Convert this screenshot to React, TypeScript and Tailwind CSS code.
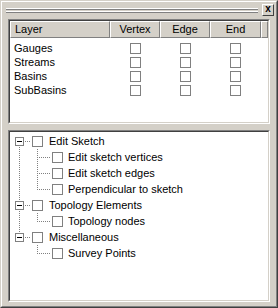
const tree = [
  { label: 'Edit Sketch', children: ['Edit sketch vertices', 'Edit sketch edges', 'Perpendicular to sketch'] },
  { label: 'Topology Elements', children: ['Topology nodes'] },
  { label: 'Miscellaneous', children: ['Survey Points'] },
];

const layers = ['Gauges', 'Streams', 'Basins', 'SubBasins'];

function Check() {
  return <span className="block w-[11px] h-[11px] border border-[#808080] bg-white shrink-0" />;
}

function Sunken({ className, children }: { className: string; children: React.ReactNode }) {
  return (
    <div className={`border border-t-[#808080] border-l-[#808080] border-b-white border-r-white ${className}`}>
      <div className="h-full border border-t-[#404040] border-l-[#404040] border-b-[#d4d0c8] border-r-[#d4d0c8] bg-white overflow-hidden">
        {children}
      </div>
    </div>
  );
}

function HeaderCell({ label, className }: { label: string; className: string }) {
  return (
    <div
      className={`h-full flex items-center border-t border-l border-t-white border-l-white border-b border-r border-b-[#808080] border-r-[#808080] ${className}`}
    >
      {label}
    </div>
  );
}

function RootGutter({ first, last }: { first: boolean; last: boolean }) {
  return (
    <svg width="22" height="16" className="shrink-0" shapeRendering="crispEdges">
      {!first && <line x1="9.5" y1="0" x2="9.5" y2="4" stroke="#808080" strokeDasharray="1 1" />}
      {!last && <line x1="9.5" y1="14" x2="9.5" y2="16" stroke="#808080" strokeDasharray="1 1" />}
      <rect x="5.5" y="4.5" width="8" height="8" fill="white" stroke="#808080" />
      <line x1="7" y1="8.5" x2="12" y2="8.5" stroke="black" />
      <line x1="15" y1="8.5" x2="21" y2="8.5" stroke="#808080" strokeDasharray="1 1" />
    </svg>
  );
}

function ChildGutter({ rootLine, lastChild }: { rootLine: boolean; lastChild: boolean }) {
  return (
    <svg width="42" height="16" className="shrink-0" shapeRendering="crispEdges">
      {rootLine && <line x1="9.5" y1="0" x2="9.5" y2="16" stroke="#808080" strokeDasharray="1 1" />}
      <line x1="27.5" y1="0" x2="27.5" y2={lastChild ? 9 : 16} stroke="#808080" strokeDasharray="1 1" />
      <line x1="29" y1="8.5" x2="41" y2="8.5" stroke="#808080" strokeDasharray="1 1" />
    </svg>
  );
}

export default function App() {
  return (
    <div
      className="w-[278px] h-[308px] bg-[#d4d0c8] text-black text-[11px] leading-none border border-t-[#d4d0c8] border-l-[#d4d0c8] border-b-[#404040] border-r-[#404040]"
      style={{ fontFamily: '"Liberation Sans", Arial, sans-serif' }}
    >
      <div className="h-full flex flex-col border border-t-white border-l-white border-b-[#808080] border-r-[#808080]">
        {/* Title grip */}
        <div className="mt-[2px] h-[12px] flex items-center pl-[4px] pr-[2px] gap-[4px]">
          <div className="flex-1 flex flex-col">
            <div className="h-px bg-white" />
            <div className="h-px bg-[#808080]" />
            <div className="h-px" />
            <div className="h-px bg-white" />
            <div className="h-px bg-[#808080]" />
          </div>
          <div className="w-[12px] h-[12px] border border-t-white border-l-white border-b-[#404040] border-r-[#404040] flex items-center justify-center text-[10px] font-bold leading-none pb-[2px]">
            x
          </div>
        </div>

        {/* Layer list */}
        <Sunken className="mt-[3px] ml-[6px] mr-[6px] h-[105px]">
          <div className="h-[17px] flex bg-[#d4d0c8]">
            <HeaderCell label="Layer" className="w-[100px] pl-[4px]" />
            <HeaderCell label="Vertex" className="w-[50px] justify-center" />
            <HeaderCell label="Edge" className="w-[50px] justify-center" />
            <HeaderCell label="End" className="w-[51px] justify-center" />
            <HeaderCell label="" className="flex-1" />
          </div>
          <div className="pt-[3px]">
            {layers.map((name) => (
              <div key={name} className="h-[14px] flex items-center">
                <div className="w-[100px] pl-[4px]">{name}</div>
                <div className="w-[50px] flex justify-center"><Check /></div>
                <div className="w-[50px] flex justify-center"><Check /></div>
                <div className="w-[51px] flex justify-center"><Check /></div>
              </div>
            ))}
          </div>
        </Sunken>

        {/* Snap tree */}
        <Sunken className="mt-[6px] ml-[6px] mr-[6px] h-[172px]">
          <div className="pt-[1px]">
            {tree.map((node, i) => {
              const lastRoot = i === tree.length - 1;
              return (
                <div key={node.label}>
                  <div className="h-4 flex items-center">
                    <RootGutter first={i === 0} last={lastRoot} />
                    <Check />
                    <span className="ml-[6px]">{node.label}</span>
                  </div>
                  {node.children.map((child, j) => (
                    <div key={child} className="h-4 flex items-center">
                      <ChildGutter rootLine={!lastRoot} lastChild={j === node.children.length - 1} />
                      <Check />
                      <span className="ml-[5px]">{child}</span>
                    </div>
                  ))}
                </div>
              );
            })}
          </div>
        </Sunken>
      </div>
    </div>
  );
}
